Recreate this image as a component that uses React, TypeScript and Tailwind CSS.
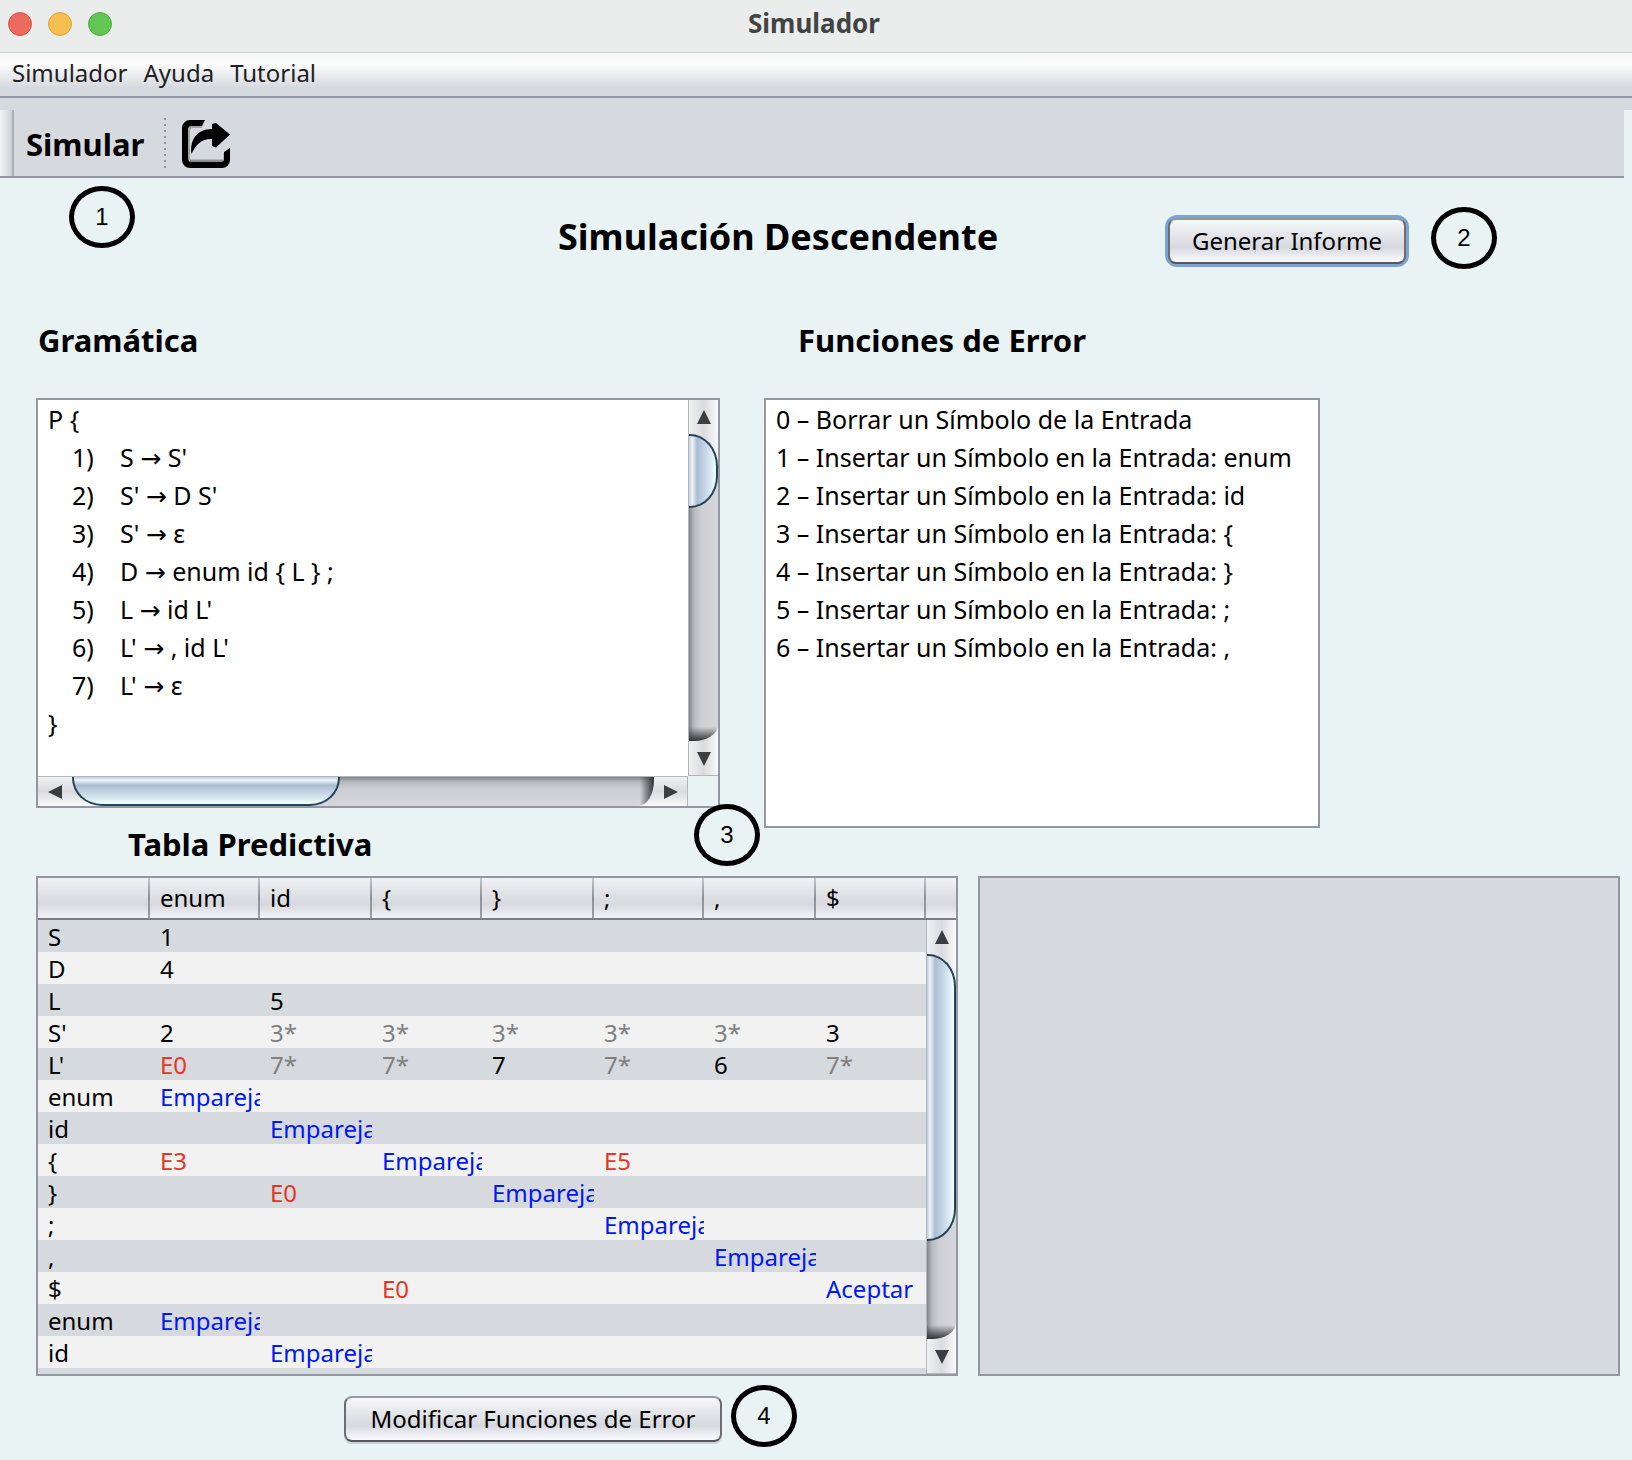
import React from 'react'

type Tone = 'plain' | 'muted' | 'error' | 'match'

const toneClass: Record<Tone, string> = {
  plain: 'text-black',
  muted: 'text-[#808080]',
  error: 'text-[#ea3323]',
  match: 'text-[#0018f5]',
}

const columns = ['', 'enum', 'id', '{', '}', ';', ',', '$']

const M = 'Emparejar'
const rows: string[][] = [
  ['S', '1', '', '', '', '', '', ''],
  ['D', '4', '', '', '', '', '', ''],
  ['L', '', '5', '', '', '', '', ''],
  ["S'", '2', '3*', '3*', '3*', '3*', '3*', '3'],
  ["L'", 'E0', '7*', '7*', '7', '7*', '6', '7*'],
  ['enum', M, '', '', '', '', '', ''],
  ['id', '', M, '', '', '', '', ''],
  ['{', 'E3', '', M, '', 'E5', '', ''],
  ['}', '', 'E0', '', M, '', '', ''],
  [';', '', '', '', '', M, '', ''],
  [',', '', '', '', '', '', M, ''],
  ['$', '', '', 'E0', '', '', '', 'Aceptar'],
  ['enum', M, '', '', '', '', '', ''],
  ['id', '', M, '', '', '', '', ''],
]

function toneOf(value: string): Tone {
  if (value.endsWith('*')) return 'muted'
  if (/^E\d/.test(value)) return 'error'
  if (value === M || value === 'Aceptar') return 'match'
  return 'plain'
}

const rules = ["S → S'", "S' → D S'", "S' → ε", 'D → enum id { L } ;', "L → id L'", "L' → , id L'", "L' → ε"]

const errors = [
  'Borrar un Símbolo de la Entrada',
  'Insertar un Símbolo en la Entrada: enum',
  'Insertar un Símbolo en la Entrada: id',
  'Insertar un Símbolo en la Entrada: {',
  'Insertar un Símbolo en la Entrada: }',
  'Insertar un Símbolo en la Entrada: ;',
  'Insertar un Símbolo en la Entrada: ,',
]

function Marker({ n, className = '' }: { n: number; className?: string }) {
  return (
    <span
      className={`flex h-[62px] w-[66px] shrink-0 items-center justify-center rounded-[50%] border-5 border-black font-['Liberation_Sans',sans-serif] text-2xl text-black ${className}`}
    >
      {n}
    </span>
  )
}

function Arrow({ points }: { points: string }) {
  return (
    <svg width="14" height="14" viewBox="0 0 14 14" aria-hidden="true">
      <polygon points={points} fill="#3c3d40" />
    </svg>
  )
}

function VerticalScroll({ thumb }: { thumb: string }) {
  return (
    <div className="flex min-h-0 w-[30px] flex-1 flex-col border-b border-l border-[#b4b6ba] bg-linear-to-r from-[#f0f1f2] via-[#d9dbdf] to-[#f8f9fa]">
      <button aria-label="Subir" className="flex h-[34px] shrink-0 items-center justify-center">
        <Arrow points="7,0 14,14 0,14" />
      </button>
      <div className="flex-1 rounded-br-[24px_16px] bg-[linear-gradient(to_top,#303236_0,#30323600_14px),linear-gradient(to_right,#828489,#b9babf_5px,#cdced3_12px,#d6d7dc)]">
        <div className="bg-[linear-gradient(to_right,#f0f1f2,#d9dbdf,#f8f9fa)] bg-size-[100%_32px] bg-no-repeat">
          <div
            className={`${thumb} rounded-r-[28px_32px] border-2 border-l-0 border-[#26435a] bg-[linear-gradient(to_right,#b9cadb,#f2f5f9_3px,#abbdd2_8px,#c9d9e8_17px,#f0ffff)]`}
          />
        </div>
      </div>
      <button aria-label="Bajar" className="flex h-[34px] shrink-0 items-center justify-center pt-0.5">
        <Arrow points="0,0 14,0 7,14" />
      </button>
    </div>
  )
}

function HorizontalScroll() {
  return (
    <div className="flex h-[30px] flex-1 border-t border-[#b4b6ba] bg-linear-to-b from-[#f0f1f2] via-[#d9dbdf] to-[#f8f9fa]">
      <button aria-label="Izquierda" className="flex w-[34px] shrink-0 items-center justify-center">
        <Arrow points="14,0 14,14 0,7" />
      </button>
      <div className="flex flex-1 rounded-br-[16px_26px] bg-[linear-gradient(to_left,#303236_0,#30323600_14px),linear-gradient(to_bottom,#828489,#b9babf_5px,#cdced3_12px,#d6d7dc)]">
        <div className="flex w-[46%] bg-[linear-gradient(to_bottom,#f0f1f2,#d9dbdf,#f8f9fa)] bg-size-[32px_100%] bg-no-repeat">
          <div className="flex-1 rounded-b-[30px_28px] border-2 border-t-0 border-[#26435a] bg-[linear-gradient(to_bottom,#b9cadb,#f2f5f9_3px,#abbdd2_8px,#c9d9e8_17px,#f0ffff)]" />
        </div>
      </div>
      <button
        aria-label="Derecha"
        className="flex w-[34px] shrink-0 items-center justify-center border-r border-[#b4b6ba]"
      >
        <Arrow points="0,0 14,7 0,14" />
      </button>
    </div>
  )
}

const headCell =
  'bg-[linear-gradient(to_bottom,#f2f3f6,#e2e3e7_35%,#d7d9df_65%,#f1f2f6)] border-b-2 border-[#7a7d85]'

export default function App() {
  return (
    <div className="flex min-h-screen flex-col bg-[#eaf3f4] font-['Noto_Sans','DejaVu_Sans',sans-serif] text-2xl text-black">
      <header className="relative flex h-[53px] items-center justify-center border-b border-[#d0d2d1] bg-[#ebedec]">
        <div className="absolute left-2 flex gap-4 pb-1">
          <button aria-label="Cerrar" className="size-6 rounded-full border border-[#d65548] bg-[#ed6a5e]" />
          <button aria-label="Minimizar" className="size-6 rounded-full border border-[#dba43b] bg-[#f5bf4f]" />
          <button aria-label="Ampliar" className="size-6 rounded-full border border-[#4dab3f] bg-[#62c554]" />
        </div>
        <h1 className="pr-1 pb-1.5 text-[26px] font-bold text-[#424343]">Simulador</h1>
      </header>

      <nav className="flex h-[45px] gap-4 border-b-2 border-[#9297a1] bg-[linear-gradient(to_bottom,#f4f6f5,#fdfdfd_25%,#d6d9de_80%)] pl-3 text-[#1f2022]">
        <button className="pb-1">Simulador</button>
        <button className="pb-1">Ayuda</button>
        <button className="pb-1">Tutorial</button>
      </nav>

      <div className="h-3 bg-[#d6d9de]" />
      <div className="mr-2 flex h-[68px] items-center border-b-2 border-[#9297a1] bg-[#d6d9de]">
        <div className="h-full w-3.5 border-r-2 border-[#abafb6] bg-linear-to-r from-[#f2f3f4] to-[#cdd0d5]" />
        <button className="pt-1 pl-3 text-[31px] font-bold">Simular</button>
        <div className="ml-5 h-[50px] w-0.5 bg-[repeating-linear-gradient(to_bottom,#9297a1_0,#9297a1_2px,transparent_2px,transparent_6px)]" />
        <button aria-label="Exportar" className="ml-4 pt-0.5">
          <svg width="48" height="48" viewBox="0 0 48 48" fill="none">
            <path d="M20 7H11a4 4 0 0 0-4 4V40" stroke="#a0a3a6" strokeWidth="2" />
            <path d="M8 41H41" stroke="#8f9294" strokeWidth="3" />
            <path d="M42.500 33V41" stroke="#8f9294" strokeWidth="2" />
            <path
              d="M23 0 20 6H10a4 4 0 0 0-4 4v28a4 4 0 0 0 4 4h29a3 3 0 0 0 3-3v-7l6-4v12a8 8 0 0 1-8 8H8a8 8 0 0 1-8-8V8a8 8 0 0 1 8-8Z"
              fill="#000"
            />
            <path d="M30 4 34 3 48 14.500 34 27.500 30 26v-7C20 18.500 14 24 9.500 34 7.500 20 15 9 30 9Z" fill="#000" />
          </svg>
        </button>
      </div>

      <main className="relative pr-3 pl-9">
        <Marker n={1} className="absolute top-2 left-[69px]" />

        <div className="grid grid-cols-[522fr_607fr_455fr] items-start pt-[29px]">
          <h2 className="col-start-2 text-4xl leading-[60px] font-bold whitespace-nowrap">Simulación Descendente</h2>
          <div className="flex items-start gap-[22px]">
            <button className="mt-2 h-[52px] w-[244px] rounded-xl border-3 border-[#7ba3d3] bg-[#77797d]">
              <span className="flex h-full items-center justify-center rounded-lg border-2 border-t-[#97989b] border-r-[#6b6d71] border-b-[#55575c] border-l-[#6b6d71] bg-[linear-gradient(to_bottom,#f7f7f9,#e3e4e8_40%,#d6d8de_65%,#fbfbff)]">
                Generar Informe
              </span>
            </button>
            <Marker n={2} />
          </div>
        </div>

        <div className="mt-[51px] grid grid-cols-[684fr_556fr_256fr] gap-x-11">
          <section>
            <h3 className="pl-0.5 text-[31px] leading-10 font-bold">Gramática</h3>
            <div className="relative mt-[38px] flex h-[410px] flex-col border-2 border-[#9297a1] bg-white">
              <div className="flex min-h-0 flex-1">
                <div className="flex-1 pl-2.5 text-[25px] leading-[38px]">
                  <p>P {'{'}</p>
                  <ol className="pl-6">
                    {rules.map((rule, i) => (
                      <li key={rule} className="flex">
                        <span className="w-12">{i + 1})</span>
                        <span className="whitespace-nowrap">{rule}</span>
                      </li>
                    ))}
                  </ol>
                  <p>{'}'}</p>
                </div>
                <div className="flex flex-col">
                  <VerticalScroll thumb="h-[74px]" />
                </div>
              </div>
              <div className="flex">
                <HorizontalScroll />
                <div className="w-[30px] bg-[#eaf3f4]" />
              </div>
              <Marker n={3} className="absolute -right-[42px] -bottom-[60px]" />
            </div>
            <h3 className="mt-4 pl-[92px] text-[31px] leading-10 font-bold">Tabla Predictiva</h3>
          </section>

          <section>
            <h3 className="pl-[34px] text-[31px] leading-10 font-bold whitespace-nowrap">Funciones de Error</h3>
            <ul className="mt-[38px] h-[430px] border-2 border-[#9297a1] bg-white pl-2.5 text-[25px] leading-[38px] whitespace-nowrap">
              {errors.map((text, i) => (
                <li key={text}>
                  {i} – {text}
                </li>
              ))}
            </ul>
          </section>
        </div>

        <div className="mt-3 grid grid-cols-[922fr_642fr] gap-x-5">
          <div className="flex h-[500px] border-2 border-[#9297a1] bg-[#d6d9de]">
            <div className="min-w-0 flex-1 overflow-hidden">
              <table className="w-full table-fixed border-separate border-spacing-0">
                <thead>
                  <tr>
                    {columns.map((name, i) => (
                      <th
                        key={i}
                        scope="col"
                        className={`relative h-[42px] pl-2.5 text-left font-normal odd:w-[112px] ${headCell}`}
                      >
                        {name}
                        <span className="absolute top-0 right-0 h-full w-0.5 bg-linear-to-b from-[#c3c5ca] via-[#8c9098] to-[#9a9da4]" />
                      </th>
                    ))}
                  </tr>
                </thead>
                <tbody>
                  {rows.map((row, r) => (
                    <tr key={r} className="odd:bg-[#d6d9de] even:bg-[#f2f2f2]">
                      {row.map((value, c) => (
                        <td
                          key={c}
                          className={`h-8 overflow-hidden pt-0.5 pl-2.5 leading-[30px] whitespace-nowrap ${toneClass[toneOf(value)]}`}
                        >
                          {value}
                        </td>
                      ))}
                    </tr>
                  ))}
                </tbody>
              </table>
            </div>
            <div className="flex w-[30px] flex-col">
              <div className={`h-[42px] shrink-0 ${headCell}`} />
              <VerticalScroll thumb="h-[287px]" />
            </div>
          </div>
          <div className="border-2 border-[#9297a1] bg-[#d6d9de]" />
        </div>

        <div className="flex items-start gap-[9px] pt-[9px] pl-[308px]">
          <button className="mt-[11px] h-[46px] w-[378px] rounded-lg border-2 border-t-[#97999c] border-r-[#6b6d71] border-b-[#55575c] border-l-[#6b6d71] bg-[linear-gradient(to_bottom,#f7f7f9,#e3e4e8_40%,#d6d8de_65%,#fbfbff)] shadow-[0_2px_0_#c9d1d4]">
            Modificar Funciones de Error
          </button>
          <Marker n={4} />
        </div>
      </main>
    </div>
  )
}
